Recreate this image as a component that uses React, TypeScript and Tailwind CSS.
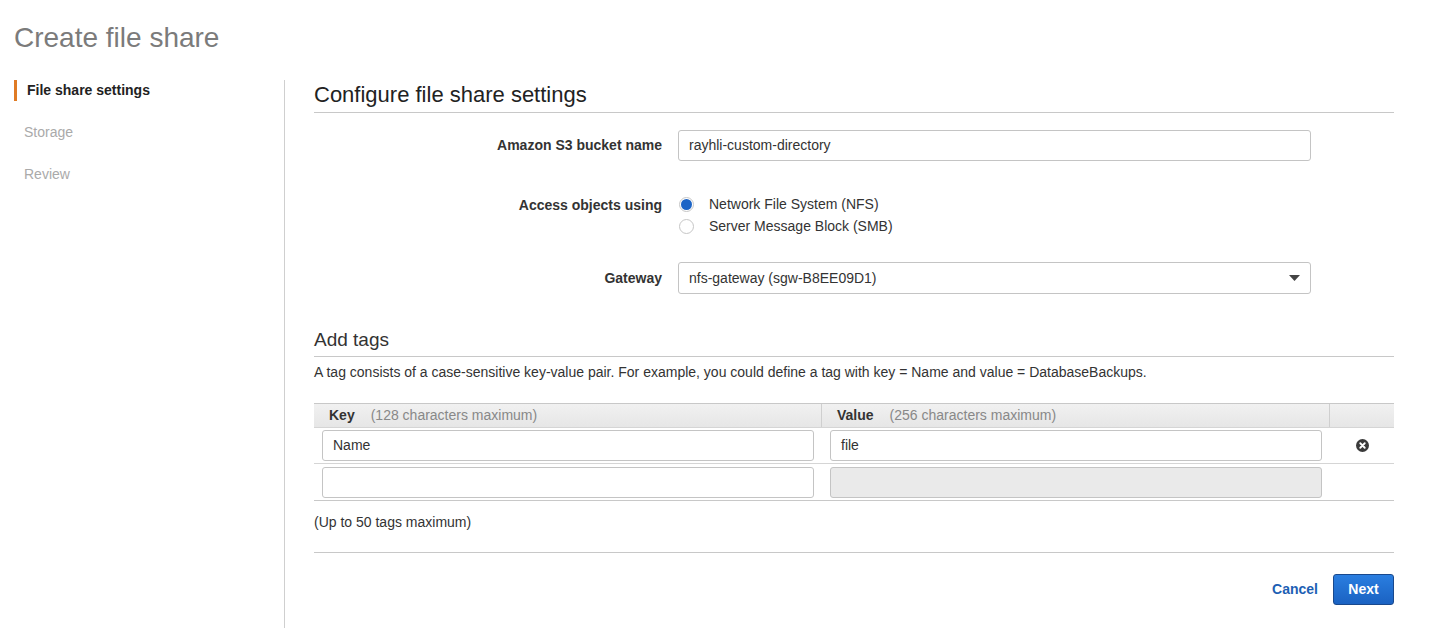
import { useState } from "react";

const font = { fontFamily: '"Liberation Sans", Arial, Helvetica, sans-serif' };

function NavItem({ label, active }: { label: string; active?: boolean }) {
  if (active) {
    return (
      <div className="flex h-[21px] items-center border-l-[3px] border-[#e07b24] pl-[10px] text-[14px] font-bold text-[#222]">
        {label}
      </div>
    );
  }
  return <div className="mt-[21px] flex h-[21px] items-center pl-[10px] text-[14px] text-[#aaa]">{label}</div>;
}

function Radio({ checked, label }: { checked?: boolean; label: string }) {
  return (
    <div className="flex h-[22px] items-center">
      <span className="ml-[1px] flex h-[15px] w-[15px] items-center justify-center rounded-full border border-[#c6c6c6] bg-white">
        {checked ? <span className="h-[11px] w-[11px] rounded-full bg-[#1c64c6]" /> : null}
      </span>
      <span className="ml-[15px] text-[14px] text-[#333]">{label}</span>
    </div>
  );
}

function Field({ value, disabled }: { value?: string; disabled?: boolean }) {
  return (
    <div
      className={`flex h-[31px] items-center rounded-[3px] border border-[#c4c4c4] px-[10px] text-[14px] text-[#333] ${
        disabled ? "bg-[#eaeaea]" : "bg-white"
      }`}
    >
      {value}
    </div>
  );
}

export default function App() {
  const [mode] = useState("nfs");

  return (
    <div className="h-[628px] w-[1434px] overflow-hidden bg-white" style={font}>
      <div className="pl-[14px] pt-[20px]">
        <h1 className="text-[28px] leading-[36px] text-[#7b7b7b]">Create file share</h1>
      </div>

      <div className="mt-[24px] flex">
        {/* left steps */}
        <div className="ml-[14px] min-h-[560px] w-[271px] border-r border-[#cfcfcf]">
          <NavItem label="File share settings" active />
          <NavItem label="Storage" />
          <NavItem label="Review" />
        </div>

        {/* main */}
        <div className="ml-[29px] w-[1080px]">
          <div className="border-b border-[#c8c8c8] pb-[3px] pt-[1px]">
            <h2 className="text-[22px] leading-[28px] text-[#222]">Configure file share settings</h2>
          </div>

          <div className="mt-[17px] flex items-center">
            <div className="w-[348px] text-right text-[14px] font-bold text-[#333]">Amazon S3 bucket name</div>
            <div className="ml-[16px] w-[633px]">
              <Field value="rayhli-custom-directory" />
            </div>
          </div>

          <div className="mt-[32px] flex">
            <div className="w-[348px] pt-[1px] text-right text-[14px] font-bold leading-[22px] text-[#333]">
              Access objects using
            </div>
            <div className="ml-[16px]">
              <Radio checked={mode === "nfs"} label="Network File System (NFS)" />
              <Radio checked={mode === "smb"} label="Server Message Block (SMB)" />
            </div>
          </div>

          <div className="mt-[25px] flex items-center">
            <div className="w-[348px] text-right text-[14px] font-bold text-[#333]">Gateway</div>
            <div className="ml-[16px] flex h-[32px] w-[633px] items-center justify-between rounded-[3px] border border-[#c4c4c4] bg-white pl-[10px] pr-[10px] text-[14px] text-[#333]">
              <span>nfs-gateway (sgw-B8EE09D1)</span>
              <svg width="11" height="6" viewBox="0 0 11 6">
                <path d="M0 0h11L5.5 6z" fill="#444" />
              </svg>
            </div>
          </div>

          <div className="mt-[34px] border-b border-[#c8c8c8] pb-[4px]">
            <h3 className="text-[19px] leading-[24px] text-[#333]">Add tags</h3>
          </div>
          <p className="mt-[6px] text-[14px] leading-[18px] text-[#333]">
            A tag consists of a case-sensitive key-value pair. For example, you could define a tag with key = Name and
            value = DatabaseBackups.
          </p>

          <div className="mt-[22px] border-b border-t border-[#c8c8c8]">
            <div className="flex h-[23px] bg-gradient-to-b from-[#f1f1f1] to-[#e6e6e6] text-[14px]">
              <div className="flex w-[508px] items-center border-r border-[#cfcfcf] pl-[15px]">
                <span className="font-bold text-[#333]">Key</span>
                <span className="ml-[16px] text-[#888]">(128 characters maximum)</span>
              </div>
              <div className="flex w-[508px] items-center border-r border-[#cfcfcf] pl-[15px]">
                <span className="font-bold text-[#333]">Value</span>
                <span className="ml-[16px] text-[#888]">(256 characters maximum)</span>
              </div>
              <div className="flex-1" />
            </div>

            <div className="flex h-[37px] items-center border-b border-t border-[#d5d5d5]">
              <div className="w-[508px] px-[8px]">
                <Field value="Name" />
              </div>
              <div className="w-[508px] px-[8px]">
                <Field value="file" />
              </div>
              <div className="flex flex-1 justify-center">
                <svg width="13" height="13" viewBox="0 0 14 14">
                  <circle cx="7" cy="7" r="7" fill="#3a3a3a" />
                  <path d="M4.6 4.6l4.8 4.8M9.4 4.6l-4.8 4.8" stroke="#fff" strokeWidth="2" strokeLinecap="round" />
                </svg>
              </div>
            </div>

            <div className="flex h-[36px] items-center">
              <div className="w-[508px] px-[8px]">
                <Field />
              </div>
              <div className="w-[508px] px-[8px]">
                <Field disabled />
              </div>
              <div className="flex-1" />
            </div>
          </div>

          <p className="mt-[12px] text-[14px] leading-[18px] text-[#333]">(Up to 50 tags maximum)</p>

          <div className="mt-[21px] border-t border-[#c8c8c8]" />

          <div className="mt-[21px] flex items-center justify-end">
            <button className="mr-[15px] text-[14px] font-bold text-[#1d5fb4]">Cancel</button>
            <button className="h-[31px] w-[61px] rounded-[3px] border border-[#19498d] bg-gradient-to-b from-[#2a7ee0] to-[#1b62c2] text-[14px] font-bold text-white">
              Next
            </button>
          </div>
        </div>
      </div>
    </div>
  );
}
